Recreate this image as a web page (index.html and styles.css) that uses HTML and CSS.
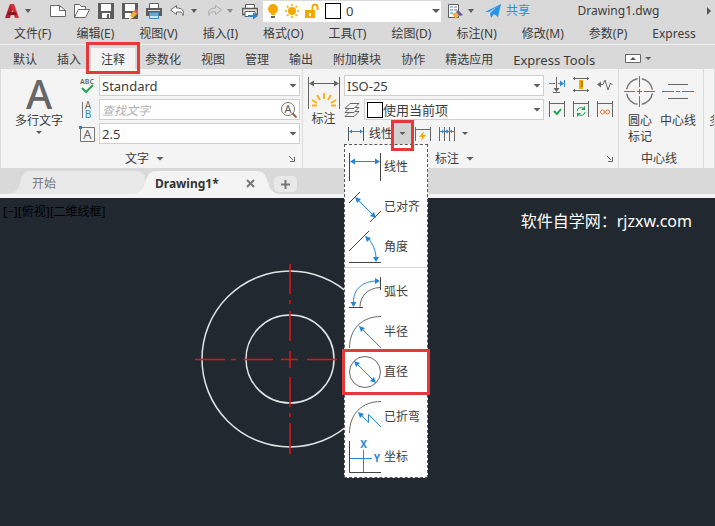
FILE: index.html
```html
<!DOCTYPE html>
<html lang="zh-CN">
<head>
  <meta charset="UTF-8" />
  <meta name="viewport" content="width=device-width, initial-scale=1.0" />
  <title>Drawing1.dwg</title>
  <link rel="stylesheet" href="styles.css">
</head>
<body>
  <header class="titlebar">
    <button class="split logo" aria-label="应用程序菜单">
      <svg width="16" height="16" viewBox="0 0 16 16"><path d="M1 15L6 1h4l-4 14z" fill="#b3202c"/><path d="M6 1h4l5 14h-4z" fill="#d6303a"/><path d="M4 9h8l1 3H3z" fill="#8f1520"/></svg>
      <span class="caret"></span>
    </button>
    <button aria-label="新建"><svg class="line" width="16" height="16" viewBox="0 0 16 16"><path d="M.5 2.500h9l6 5v6H.5z" fill="#fff"/><path d="M9.500 2.500v5h6"/></svg></button>
    <button aria-label="打开"><svg class="line" width="16" height="16" viewBox="0 0 16 16"><path d="M.5 14V1.500h5l2 2h4v3" fill="#fff"/><path d="M.5 14.500l4-8h11l-4 8z" fill="#fff"/></svg></button>
    <button aria-label="保存"><svg width="16" height="16" viewBox="0 0 16 16"><path d="M0 0h16v16H0z" fill="#5c5c5c"/><path d="M3 1h10v7H3zM4 10h8v5H4z" fill="#fff"/><path d="M9 11h2v4H9z" fill="#5c5c5c"/></svg></button>
    <button aria-label="另存为"><svg width="16" height="16" viewBox="0 0 16 16"><path d="M0 0h16v16H0z" fill="#5c5c5c"/><path d="M3 1h10v7H3zM3 10h6v5H3z" fill="#fff"/><path d="M7 16l1-4 5-5 3 3-5 5z" fill="#f2b134"/><path d="M12 8l2-2 2 1v3l-1 1z" fill="#d8546a"/><path d="M7 16l1-4 2 3z" fill="#fff"/></svg></button>
    <button aria-label="打印"><svg width="16" height="16" viewBox="0 0 16 16"><path d="M3.500.5h9v5h-9z" fill="#fff" stroke="#5c5c5c"/><path d="M0 5h16v8H0z" fill="#5c5c5c"/><path d="M2 7h12v1H2z" fill="#ddd"/><path d="M3.500 9.500h9v6h-9z" fill="#cfe6f7" stroke="#3f89bd"/><path d="M4 10h8v3H4z" fill="#65a9d6"/></svg></button>
    <span class="split">
      <button aria-label="放弃"><svg class="line" width="16" height="16" viewBox="0 0 16 16"><path d="M6.500 2.500L.5 7l6 4.500V9c4-.5 6 0 6.500 3.500 1.500-5-1-7.500-6.500-7.500z" fill="#fff"/></svg></button>
      <span class="caret"></span>
    </span>
    <span class="split muted">
      <button aria-label="重做"><svg class="line" width="16" height="16" viewBox="0 0 16 16"><path d="M9.500 2.500l6 4.500-6 4.500V9C5.500 8.500 3.500 9 3 12.500 1.500 7.500 4 5 9.500 5z"/></svg></button>
      <span class="caret"></span>
    </span>
    <button aria-label="批处理打印"><svg width="16" height="16" viewBox="0 0 16 16"><path d="M3.500 1.500h9v4h-9z" fill="#fff" stroke="#5c5c5c"/><path d="M.5 5.500h15v6H.5z" fill="#e4e4e4" stroke="#5c5c5c" stroke-width="1.500"/><path d="M3 8.500h10v5H3z" fill="#fff" stroke="#5c5c5c"/><path d="M6 12h5V9.500l5 3.500-5 3.500V14H6z" fill="#2b87d1"/></svg></button>
    <div class="field layer">
      <svg width="62" height="16" viewBox="0 0 62 16" aria-hidden="true">
        <circle cx="6" cy="6" r="5" fill="#f5a800"/><path d="M4 10h4v2H4z" fill="#f5a800"/><path d="M4 13h4v2H4z" fill="#666"/>
        <circle cx="25" cy="8" r="4" fill="#f5a800"/><path d="M25 1v2M25 13v2M18 8h2M30 8h2M20 3l1.500 1.500M28.500 11.500L30 13M30 3l-1.500 1.500M21.500 11.500L20 13" stroke="#f5a800" stroke-width="1.500"/>
        <path d="M38 7h10v8H38z" fill="#f5a800"/><path d="M45.500 7V4a2.500 2.500 0 0 1 5 0v3" fill="none" stroke="#f5a800" stroke-width="2"/><path d="M42 10h2v3h-2z" fill="#fff"/>
      </svg>
      <span class="swatch"></span>
      <select aria-label="图层"><option>0</option></select>
      <span class="caret"></span>
    </div>
    <span class="split">
      <button aria-label="特性匹配"><svg width="16" height="16" viewBox="0 0 16 16"><path d="M1.500 1.500h10v13h-10z" fill="#fff" stroke="#5c5c5c"/><path d="M3 4h3M3 7h3M3 10h3" stroke="#2b87d1"/><path d="M7 4h3M7 7h3" stroke="#777"/><path d="M5 11l4-2 3 3-3 4z" fill="#f2b134"/><path d="M9 9l2-2 5 5-3 1z" fill="#6c58a6"/></svg></button>
      <span class="caret"></span>
    </span>
    <button class="share"><svg width="16" height="16" viewBox="0 0 16 16"><path d="M0 9L16 1l-3 13-4-3-3 4-1-5 8-7-9 6z" fill="#2593e8"/></svg>共享</button>
    <h1 class="doc-title">Drawing1.dwg</h1>
    <span class="caret-right"></span>
  </header>

  <nav class="menubar">
    <a href="#">文件(F)</a><a href="#">编辑(E)</a><a href="#">视图(V)</a><a href="#">插入(I)</a><a href="#">格式(O)</a><a href="#">工具(T)</a><a href="#">绘图(D)</a><a href="#">标注(N)</a><a href="#">修改(M)</a><a href="#">参数(P)</a><a href="#">Express</a>
  </nav>

  <nav class="ribbon-tabs">
    <a href="#">默认</a><a href="#">插入</a><a href="#" class="active marked">注释</a><a href="#">参数化</a><a href="#">视图</a><a href="#">管理</a><a href="#">输出</a><a href="#">附加模块</a><a href="#">协作</a><a href="#">精选应用</a><a href="#" class="latin">Express Tools</a>
    <button class="split collapse" aria-label="最小化">
      <svg width="16" height="9" viewBox="0 0 16 9"><path d="M.5.5h15v8H.5z" fill="#fff" stroke="#666"/><path d="M5 6l3-3 3 3z" fill="#555"/></svg>
      <span class="caret small"></span>
    </button>
  </nav>

  <main class="ribbon">
    <section class="panel panel-text">
      <div class="panel-body">
        <button class="big mtext"><span class="big-a">A</span>多行文字<span class="caret small"></span></button>
        <div class="rows">
          <div class="row">
            <svg class="row-icon" width="16" height="16" viewBox="0 0 16 16"><text x="8" y="6" class="abc">ABC</text><path d="M3 10l4 4 7-7" fill="none" stroke="#23a455" stroke-width="2"/></svg>
            <div class="field"><select aria-label="文字样式"><option>Standard</option></select><span class="caret"></span></div>
          </div>
          <div class="row">
            <svg class="row-icon" width="16" height="16" viewBox="0 0 16 16"><path d="M3.500 0v16" stroke="#777"/><text x="9" y="7" class="letter">A</text><text x="9" y="16" class="letter blue">B</text></svg>
            <div class="field">
              <input type="text" placeholder="查找文字" aria-label="查找文字">
              <svg width="16" height="16" viewBox="0 0 16 16"><circle cx="7" cy="7" r="6.500" fill="#fff" stroke="#777"/><text x="7" y="11" class="find">A</text><path d="M11.500 11.500l4 4" stroke="#94633e" stroke-width="2"/></svg>
            </div>
          </div>
          <div class="row">
            <svg class="row-icon" width="16" height="16" viewBox="0 0 16 16"><path d="M1.500 1.500h14v14h-14z" fill="none" stroke="#777"/><path d="M0 0h3v3H0z" fill="#2b87d1"/><text x="8.500" y="13" class="boxed">A</text></svg>
            <div class="field"><select aria-label="文字高度"><option>2.5</option></select><span class="caret"></span></div>
          </div>
        </div>
      </div>
      <footer><button>文字<span class="caret"></span></button><svg class="launch" width="8" height="8" viewBox="0 0 8 8"><path d="M1 1l4 4M6.500 2v4.500H2" /></svg></footer>
    </section>

    <section class="panel panel-dim">
      <div class="panel-body">
        <button class="big dim">
          <svg width="32" height="34" viewBox="0 0 32 34"><path d="M.5 0v32M31.500 0v32M2 6.500h28" stroke="#666" fill="none"/><path d="M1 6.500l5-3v6zM31 6.500l-5-3v6z" fill="#666"/><path d="M16 16v6M9 18l3 5M23 18l-3 5M4 23l5 3M28 23l-5 3M4 28.500h5M28 28.500h-5" stroke="#f5b21a" stroke-width="2"/></svg>
          标注
        </button>
        <div class="rows">
          <div class="row">
            <div class="field"><select aria-label="标注样式"><option>ISO-25</option></select><span class="caret"></span></div>
          </div>
          <div class="row">
            <svg class="row-icon" width="16" height="16" viewBox="0 0 16 16"><g fill="#f4f4f4" stroke="#666"><path d="M1 14.500l5-5h9l-5 5z"/><path d="M1 10.500l5-5h9l-5 5z"/><path d="M1 6.500l5-5h9l-5 5z"/></g></svg>
            <div class="field"><span class="swatch"></span><select aria-label="标注图层"><option>使用当前项</option></select><span class="caret"></span></div>
          </div>
          <div class="row dim-tools">
            <button class="linear"><svg width="16" height="14" viewBox="0 0 16 14"><path d="M.5 0v14M15.500 0v14" stroke="#555"/><path d="M2 4.500h12" stroke="#2b87d1"/><path d="M1 4.500l3-2v4zM15 4.500l-3-2v4z" fill="#2b87d1"/></svg>线性</button>
            <button class="drop marked" aria-label="标注类型"><span class="caret small"></span></button>
            <button aria-label="快速标注"><svg width="16" height="14" viewBox="0 0 16 14"><path d="M.5 0v14M15.500 0v14M1 2.500h14" stroke="#666"/><path d="M9 4L4 10h3l-1 4 5-6H8z" fill="#f5a800"/></svg></button>
            <button class="split" aria-label="连续标注"><svg width="16" height="14" viewBox="0 0 16 14"><path d="M.5 0v14M5.500 0v14M10.500 0v14M15.500 0v14" stroke="#666"/><path d="M1 4.500h14" stroke="#2b87d1"/><path d="M5 4.500l-2-2v4zM6 4.500l2-2v4zM10 4.500l-2-2v4zM11 4.500l2-2v4z" fill="#2b87d1"/></svg><span class="caret small"></span></button>

            <div class="menu" role="menu">
              <button role="menuitem"><svg viewBox="0 0 32 32"><path class="k" d="M.5 2v28M31.500 2v28"/><path class="b" d="M3 10.500h26"/><path class="f" d="M1 10.500l5-3v6zM31 10.500l-5-3v6z"/></svg>线性</button>
              <button role="menuitem"><svg viewBox="0 0 32 32"><path class="k" d="M0 12L11 1M21 31l11-11"/><path class="b" d="M8 8l17 17"/><path class="f" d="M6 6l6 2-4 4zM27 27l-6-2 4-4z"/></svg>已对齐</button>
              <button role="menuitem"><svg viewBox="0 0 32 32"><path class="k" d="M0 20L20 0M0 31.500h32"/><path class="b" d="M19 7c5 6 8 13 8 21"/><path class="f" d="M16 5l6 2-4 4zM27 31l-3-5h6z"/></svg>角度</button>
              <hr>
              <button role="menuitem"><svg viewBox="0 0 32 32"><path class="k" d="M31.500 1v13M0 31.500h14"/><path class="a" d="M11 31c0-11 8-19 20-19.500"/><path class="b" d="M4.500 27C4 13 14 5 28 5"/><path class="f" d="M31 5l-5-3v6zM4.500 31l-3-5h6z"/></svg>弧长</button>
              <button role="menuitem"><svg viewBox="0 0 32 32"><path class="a" d="M.5 32C.5 13 13 .5 32 .5"/><path class="b" d="M12 12l20 20"/><path class="f" d="M10 10l6 2-4 4z"/></svg>半径</button>
              <button role="menuitem" class="marked"><svg viewBox="0 0 32 32"><circle class="a" cx="16" cy="16" r="15.500"/><path class="b" d="M7 7l18 18"/><path class="f" d="M5 5l6 2-4 4zM27 27l-6-2 4-4z"/></svg>直径</button>
              <hr>
              <button role="menuitem"><svg viewBox="0 0 32 32"><path class="a" d="M.5 32C.5 13 13 .5 32 .5"/><path class="b" d="M11 13l8.500 8.500v-8L32 26"/><path class="f" d="M9 11l6 2-4 4z"/></svg>已折弯</button>
              <button role="menuitem"><svg viewBox="0 0 32 32"><path class="k" d="M.5 0v31.500H32"/><path class="b" d="M14.500 9v22M1 17.500h22"/><text x="14.500" y="7">X</text><text x="28" y="21">Y</text></svg>坐标</button>
            </div>
          </div>
        </div>
        <div class="tools">
          <button aria-label="打断"><svg viewBox="0 0 16 16"><path d="M7.500 0v12M4 15.500h7" stroke="#666"/><path d="M0 6.500h6M9 6.500h5M15.500 3v7" stroke="#2b87d1"/><path d="M7.500 15l-3-4h6z" fill="#666"/><path d="M15 6.500l-4-3v6z" fill="#2b87d1"/></svg></button>
          <button aria-label="调整间距"><svg viewBox="0 0 16 16"><path d="M0 1.500h16M0 13.500h16M1.500 0v3M14.500 0v3M1.500 12v3M14.500 12v3" stroke="#666"/><path d="M6 3h4v9H6z" fill="#f5a800"/><path d="M8 5h2M8 7h2M8 9h2" stroke="#8a5e00"/></svg></button>
          <button aria-label="折弯标注"><svg viewBox="0 0 16 16"><path d="M2 7.500h4L8 3l3 10 2.500-7 2 2" stroke="#666" fill="none"/><path d="M0 7.500l4-3v6z" fill="#666"/></svg></button>
          <button aria-label="检验"><svg viewBox="0 0 16 16"><path d="M.5 0v16M15.500 0v16M1 2.500h14" stroke="#666"/><path d="M5 10l3 3 4-5" stroke="#23a455" stroke-width="2" fill="none"/></svg></button>
          <button aria-label="更新"><svg viewBox="0 0 16 16"><path d="M.5 0v16M15.500 0v16M1 2.500h14" stroke="#666"/><path d="M4 10a4 4 0 0 1 7-2M12 11a4 4 0 0 1-7 2" stroke="#23a455" fill="none"/><path d="M12 5v4H8zM4 16v-4h4z" fill="#23a455"/></svg></button>
          <button aria-label="重新关联"><svg viewBox="0 0 16 16"><path d="M.5 0v16M15.500 0v16M1 2.500h14" stroke="#666"/><circle cx="5.500" cy="11" r="2" fill="none" stroke="#e87531"/><circle cx="10.500" cy="11" r="2" fill="none" stroke="#e87531"/></svg></button>
        </div>
      </div>
      <footer><button>标注<span class="caret"></span></button><svg class="launch" width="8" height="8" viewBox="0 0 8 8"><path d="M1 1l4 4M6.500 2v4.500H2"/></svg></footer>
    </section>

    <section class="panel panel-center">
      <div class="panel-body">
        <button class="big"><svg width="32" height="32" viewBox="0 0 32 32"><circle cx="15.500" cy="16.500" r="13" fill="none" stroke="#777" stroke-width="1.500" stroke-dasharray="16 4.420" stroke-dashoffset="-2"/><path d="M15.500 1v11M15.500 14v5M15.500 21v11M0 16.500h11M13 16.500h5M20 16.500h11" stroke="#2b87d1"/></svg>圆心<br>标记</button>
        <button class="big"><svg width="32" height="32" viewBox="0 0 32 32"><path d="M6 9.500h20M6 23.500h20" stroke="#666"/><path d="M0 16.500h12M14 16.500h4M20 16.500h12" stroke="#2b87d1"/></svg>中心线</button>
      </div>
      <footer><span>中心线</span></footer>
    </section>

    <section class="panel panel-leader">
      <div class="panel-body"><button class="big">多重引线</button></div>
    </section>
  </main>

  <nav class="file-tabs">
    <a href="#" class="file-tab"><svg viewBox="0 0 145 24" preserveAspectRatio="none"><path d="M0 24c20 0 18-6 21-15 2-6 4-9 9-9h106c6 0 9 3 9 9v15z"/></svg><span>开始</span></a>
    <a href="#" class="file-tab current"><svg viewBox="0 0 154 24" preserveAspectRatio="none"><path d="M0 24c15 0 14-7 17-15 2-6 5-9 10-9h101c5 0 8 3 10 9 3 8 3 15 16 15z"/></svg><span>Drawing1*</span></a>
    <button class="tab-close" aria-label="关闭"><svg width="9" height="9" viewBox="0 0 9 9"><path d="M1 1l7 7M8 1L1 8" stroke="#777" stroke-width="2"/></svg></button>
    <button class="tab-add" aria-label="新图形"><svg width="9" height="9" viewBox="0 0 9 9"><path d="M0 4.500h9M4.500 0v9" stroke="#777" stroke-width="2"/></svg></button>
  </nav>

  <section class="canvas">
    <svg class="drawing" width="400" height="320" viewBox="0 0 400 320">
      <g fill="none" stroke="#dfe3e6" stroke-width="1.500"><circle cx="290" cy="161" r="88"/><circle cx="290" cy="161" r="44"/></g>
      <path d="M195 161.500h30M231 161.500h5M243 161.500h30M281 161.500h17M307 161.500h30M343 161.500h5M354 161.500h30M290 66v30M290 102v4M290 113v30M290 153v17M290 179v30M290 215v4M290 225v31" stroke="#e81010" stroke-width="1.500"/>
    </svg>
    <p class="view-label">[−][俯视][二维线框]</p>
    <p class="watermark">软件自学网：rjzxw.com</p>
  </section>
</body>
</html>
```

FILE: styles.css
```css
* {
  box-sizing: border-box;
  padding: 0;
  margin: 0;
}

body {
  display: flex;
  flex-direction: column;
  min-height: 100vh;
  overflow: hidden;
  background: #d9d9d9;
  color: #3c3c3c;
  font: 12px/16px "Noto Sans", "Noto Sans CJK SC", sans-serif;
}

button,
select,
input {
  font: inherit;
  color: inherit;
  background: none;
  border: none;
  outline: none;
}

a {
  color: inherit;
  text-decoration: none;
  white-space: nowrap;
}

svg {
  display: block;
  flex: none;
}

.line {
  fill: none;
  stroke: #666;
}

.caret {
  flex: none;
  width: 8px;
  height: 4px;
  background: #5c5c5c;
  clip-path: polygon(0 0, 100% 0, 50% 100%);
}

.caret.small {
  width: 6px;
  height: 3px;
}

.split {
  display: flex;
  align-items: center;
  gap: 4px;
}

/* red highlight boxes */
.marked {
  position: relative;
}

.marked::after {
  content: "";
  position: absolute;
  inset: -3px;
  border: 3px solid #e5383b;
  z-index: 5;
  pointer-events: none;
}

/* title bar */
.titlebar {
  display: flex;
  align-items: center;
  gap: 8px;
  height: 22px;
  padding: 0 4px;
}

.logo {
  margin-right: 10px;
}

.titlebar .split .caret {
  width: 6px;
  height: 4px;
  margin: 0 1px;
}

.muted .line {
  stroke: #aaa;
}

.muted .caret {
  background: #888;
}

.field {
  display: flex;
  align-items: center;
  flex: 1;
  min-width: 0;
  height: 21px;
  padding: 0 2px;
  background: #fff;
  border: 1px solid #cfcfcf;
}

.field select,
.field input {
  flex: 1;
  min-width: 0;
  appearance: none;
  font-size: 13px;
}

.field input::placeholder {
  color: #b0b0b0;
  font-size: 12px;
  font-style: italic;
}

.field.layer {
  flex: 0 0 178px;
  margin: 0 -2px 0 -3px;
  padding: 0 1px 0 4px;
  border: none;
}

.layer select {
  padding-left: 5px;
}

.layer .swatch {
  margin-left: -4px;
}

.swatch {
  flex: none;
  width: 16px;
  height: 16px;
  background: #fff;
  border: 1px solid #000;
}

.share {
  display: flex;
  align-items: center;
  gap: 5px;
  margin-left: 2px;
  color: #2593e8;
  white-space: nowrap;
}

.doc-title {
  flex: 1;
  text-align: center;
  font-size: 12px;
  font-weight: 400;
}

.caret-right {
  width: 4px;
  height: 8px;
  background: #555;
  clip-path: polygon(0 0, 100% 50%, 0 100%);
}

/* menus and ribbon tabs */
.menubar {
  display: flex;
  align-items: center;
  gap: 25px;
  height: 23px;
  padding: 2px 0 0 14px;
  border-bottom: 1px solid #f0f0f0;
}

.ribbon-tabs {
  display: flex;
  align-items: flex-end;
  height: 24px;
  padding-left: 3px;
}

.ribbon-tabs a {
  padding: 4px 10px 1px;
}

.ribbon-tabs .latin {
  font-size: 13px;
}

.ribbon-tabs .active {
  background: #f4f4f4;
}

.ribbon-tabs .active::after {
  inset: -6px -5px -5px;
}

.collapse {
  height: 21px;
  margin-left: 20px;
}

/* ribbon */
.ribbon {
  display: flex;
  margin-left: 1px;
  background: #f4f4f4;
}

.panel {
  display: flex;
  flex-direction: column;
  flex: none;
  padding-top: 6px;
  border-right: 1px solid #dcdcdc;
}

.panel-body {
  display: flex;
  height: 69px;
}

.panel footer {
  display: flex;
  align-items: center;
  height: 24px;
  padding: 5px 4px 0 0;
}

.panel footer button,
.panel footer span:not(.caret) {
  display: flex;
  flex: 1;
  align-items: center;
  justify-content: center;
  gap: 7px;
}

.launch {
  fill: none;
  stroke: #666;
}

.rows {
  display: flex;
  flex-direction: column;
  flex: 1;
  gap: 3px;
  min-width: 0;
}

.row {
  display: flex;
  align-items: center;
  gap: 4px;
  height: 21px;
}

.big {
  display: flex;
  flex-direction: column;
  flex: none;
  align-items: center;
  white-space: nowrap;
}

.panel-text {
  width: 302px;
  padding-right: 2px;
}

.mtext {
  width: 76px;
  margin-right: 2px;
}

.big-a {
  height: 38px;
  color: #666;
  font-size: 40px;
  font-weight: 500;
  line-height: 37px;
}

.mtext .caret {
  margin-top: 2px;
}

.row-icon {
  overflow: visible;
}

.row-icon text {
  text-anchor: middle;
  fill: #666;
}

.row-icon .abc {
  font-size: 7px;
  font-weight: 600;
}

.row-icon .letter {
  font-size: 10px;
}

.row-icon .blue {
  fill: #2b87d1;
}

.row-icon .boxed {
  font-size: 13px;
}

.find {
  font-size: 11px;
  text-anchor: middle;
  fill: #555;
}

.panel-dim {
  width: 316px;
}

.dim {
  width: 41px;
  padding-top: 2px;
}

.panel-dim .rows {
  flex: 0 0 200px;
}

.dim-tools {
  position: relative;
  padding-left: 4px;
}

.linear {
  display: flex;
  align-items: center;
  gap: 5px;
  width: 42px;
  white-space: nowrap;
}

.drop {
  display: flex;
  align-items: center;
  justify-content: center;
  width: 17px;
  height: 21px;
  background: #d2d2d2;
}

.drop.marked::after {
  inset: -3px -3px -7px;
}

.dim-tools .split {
  gap: 7px;
  margin-left: 4px;
}

.tools {
  display: grid;
  grid-template-columns: repeat(3, 16px);
  grid-auto-rows: 16px;
  gap: 8px;
  padding: 2px 0 0 5px;
}

.tools svg {
  width: 16px;
  height: 16px;
}

/* dimension type menu */
.menu {
  position: absolute;
  top: 21px;
  left: 0;
  z-index: 4;
  width: 84px;
  padding: 2px 0 0;
  background: #fff;
  border: 1px dashed #555;
}

.menu button {
  display: flex;
  align-items: center;
  gap: 3px;
  width: 100%;
  height: 40px;
  padding-left: 4px;
}

.menu hr {
  height: 5px;
  border: none;
  border-top: 1px solid #d4d4d4;
}

.menu svg {
  width: 32px;
  height: 32px;
  overflow: visible;
}

.menu .k {
  fill: none;
  stroke: #444;
}

.menu .a {
  fill: none;
  stroke: #6d6865;
}

.menu .b {
  fill: none;
  stroke: #2b87d1;
}

.menu .f {
  fill: #1f86dc;
}

.menu text {
  fill: #2b87d1;
  font-size: 10px;
  font-weight: 700;
  text-anchor: middle;
}

.panel-center {
  width: 85px;
}

.panel-center .panel-body {
  gap: 4px;
  padding-left: 5px;
}

.panel-center .big svg {
  margin-bottom: 6px;
}

.panel-leader {
  flex: 1;
  min-width: 0;
  overflow: hidden;
}

.panel-leader .big {
  padding: 38px 0 0 5px;
}

/* drawing tabs */
.file-tabs {
  display: flex;
  align-items: flex-end;
  height: 30px;
  border-bottom: 4px solid #f4f4f4;
}

.file-tab {
  position: relative;
  width: 145px;
  height: 23px;
  padding: 5px 0 0 32px;
  color: #777;
}

.file-tab svg {
  position: absolute;
  inset: 0;
  width: 100%;
  height: 100%;
  fill: #e9e9e9;
}

.file-tab span {
  position: relative;
}

.file-tab.current {
  width: 154px;
  margin-left: -16px;
  padding-left: 26px;
  color: #333;
  font-weight: 700;
}

.current svg {
  fill: #f4f4f4;
}

.file-tab.current svg {
  fill: #f4f4f4;
}

.tab-close {
  position: relative;
  height: 23px;
  margin-left: -38px;
  padding: 2px 1px 0;
}

.tab-add {
  height: 16px;
  margin: 0 0 2px 18px;
  padding: 0 7px;
  background: #e9e9e9;
  border-radius: 5px;
}

/* model space */
.canvas {
  position: relative;
  flex: 1;
  background: #212830;
}

.drawing {
  position: absolute;
  top: 0;
  left: 0;
}

.view-label {
  position: relative;
  padding: 6px 3px;
  color: #000;
}

.watermark {
  position: absolute;
  top: 13px;
  right: 23px;
  color: #fff;
  font-size: 16px;
  line-height: 20px;
}
```
